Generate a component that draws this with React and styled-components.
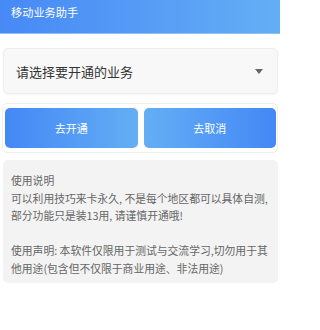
import React from "react";
import styled, { createGlobalStyle } from "styled-components";

const GlobalStyle = createGlobalStyle`
  html, body {
    margin: 0;
    padding: 0;
    background: #ffffff;
  }
  body {
    font-family: "Noto Sans CJK SC", "Noto Sans", sans-serif;
  }
`;

const Page = styled.div`
  width: 280px;
  display: flex;
  flex-direction: column;
`;

const Header = styled.div`
  height: 34px;
  box-sizing: border-box;
  padding: 4px 0 0 11px;
  background: linear-gradient(90deg, #4789f6 0%, #64aef5 100%);
  border-bottom: 1px solid #8cc2f7;
  color: #ffffff;
  font-size: 11.2px;
  line-height: 16px;
`;

const Content = styled.div`
  display: flex;
  flex-direction: column;
  padding: 14px 2px 0 2px;
`;

const SelectCard = styled.div`
  height: 46px;
  box-sizing: border-box;
  margin-left: 1px;
  display: flex;
  align-items: center;
  justify-content: space-between;
  padding: 0 14px 0 12px;
  background: #f8f8f8;
  border: 1px solid #eeeeee;
  border-radius: 5px;
  box-shadow: 0 1px 2px rgba(0, 0, 0, 0.04);
`;

const SelectText = styled.span`
  color: #333333;
  font-size: 13px;
`;

const Caret = styled.span`
  width: 0;
  height: 0;
  border-left: 4px solid transparent;
  border-right: 4px solid transparent;
  border-top: 5px solid #666666;
`;

const ButtonPanel = styled.div`
  margin-top: 9px;
  height: 50px;
  box-sizing: border-box;
  display: flex;
  gap: 6px;
  padding: 4px 1px 4px 2px;
  border: 1px solid #efefef;
  border-radius: 5px;
`;

const ActionButton = styled.button`
  flex: 1;
  height: 40px;
  border: none;
  border-radius: 5px;
  color: #ffffff;
  font-family: inherit;
  font-size: 11px;
  background: ${(p) =>
    p.$reverse
      ? "linear-gradient(90deg, #64aef5 0%, #4388f6 100%)"
      : "linear-gradient(90deg, #4388f6 0%, #64aef5 100%)"};
`;

const InfoBox = styled.div`
  margin: 7px 0 0 1px;
  height: 123px;
  box-sizing: border-box;
  padding: 12px 8px 0 8px;
  background: #f3f3f3;
  border-radius: 5px;
  color: #666666;
  font-size: 10.8px;
  line-height: 17.6px;
`;

const Para = styled.p`
  margin: 0 0 ${(p) => (p.$gap ? "17.6px" : "0")};
`;

export default function App() {
  return (
    <Page>
      <GlobalStyle />
      <Header>移动业务助手</Header>
      <Content>
        <SelectCard>
          <SelectText>请选择要开通的业务</SelectText>
          <Caret />
        </SelectCard>
        <ButtonPanel>
          <ActionButton>去开通</ActionButton>
          <ActionButton $reverse>去取消</ActionButton>
        </ButtonPanel>
        <InfoBox>
          <Para $gap>
            使用说明
            <br />
            可以利用技巧来卡永久, 不是每个地区都可以具体自测,
            <br />
            部分功能只是装13用, 请谨慎开通哦!
          </Para>
          <Para>
            使用声明: 本软件仅限用于测试与交流学习,切勿用于其他用途(包含但不仅限于商业用途、非法用途)
          </Para>
        </InfoBox>
      </Content>
    </Page>
  );
}
